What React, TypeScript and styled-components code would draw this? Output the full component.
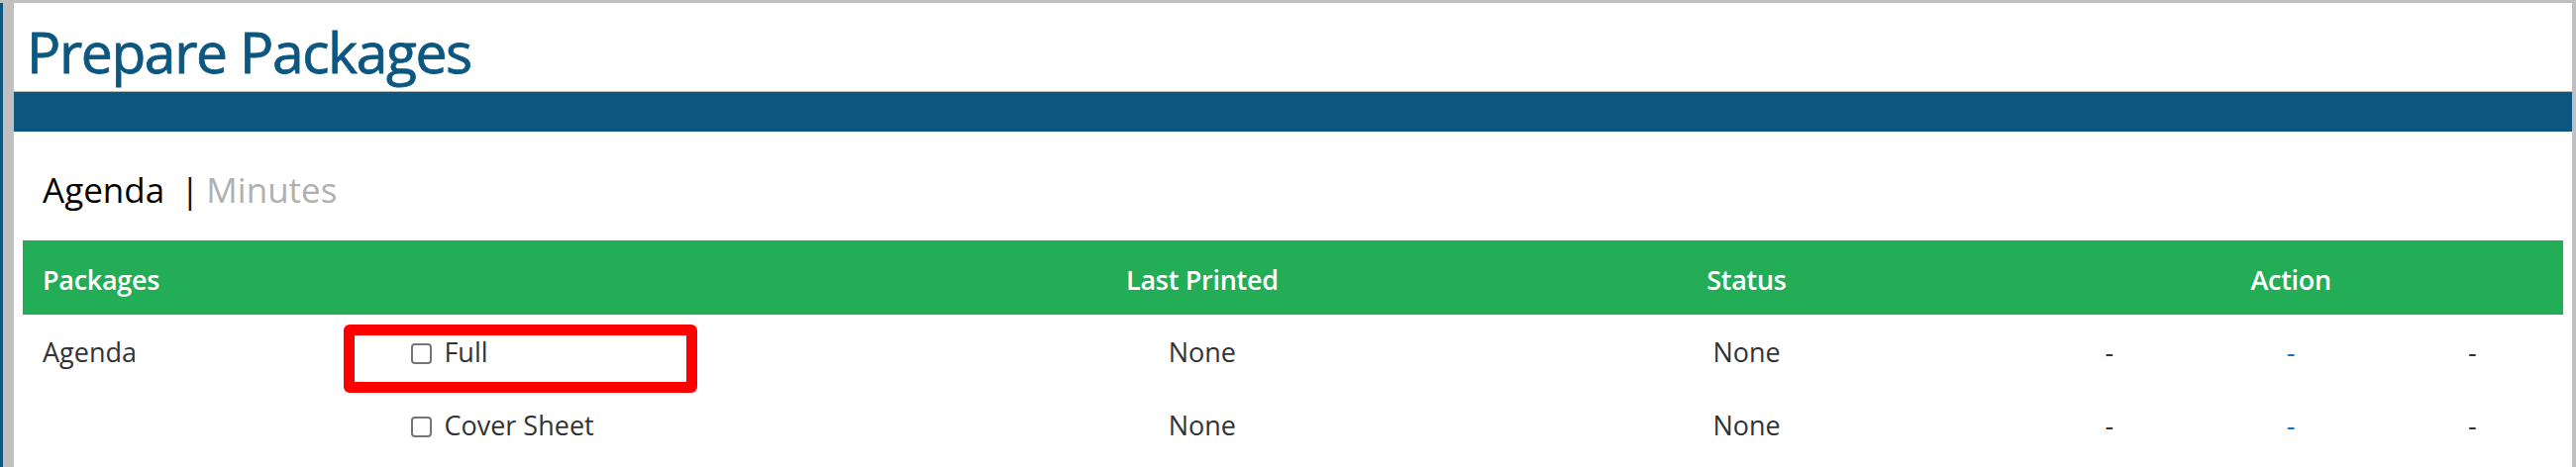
import React from "react";
import styled, { createGlobalStyle } from "styled-components";

const GlobalStyle = createGlobalStyle`
  html, body {
    margin: 0;
    padding: 0;
    background: #c0c0c0;
  }
  body {
    font-family: "Open Sans", "Liberation Sans", sans-serif;
    color: #333;
  }
  * { box-sizing: border-box; }
`;

const Page = styled.div`
  padding: 3px 4px 0 0;
  min-height: 472px;
`;

const Frame = styled.div`
  border-left: 3px solid #0b5780;
  padding-left: 11px;
  min-height: 469px;
`;

const Panel = styled.main`
  background: #ffffff;
  min-height: 469px;
  display: flex;
  flex-direction: column;
`;

const TitleBar = styled.header`
  padding: 9px 0 0 13px;
  border-bottom: 1px solid #b8b8b8;
`;

const Title = styled.h1`
  margin: 0;
  font-family: "Open Sans", sans-serif;
  font-weight: 400;
  font-size: 57px;
  letter-spacing: -1.4px;
  -webkit-text-stroke: 0.8px #0b5780;
  line-height: 80px;
  color: #0b5780;
`;

const BlueBand = styled.div`
  height: 40px;
  background: #0b5780;
`;

const Tabs = styled.nav`
  display: flex;
  align-items: baseline;
  margin: 36px 0 29px 29px;
  font-size: 35px;
  line-height: 45px;
`;

const Tab = styled.span<{ $active?: boolean }>`
  color: ${(p) => (p.$active ? "#000" : "#b0b0b0")};
`;

const TabSep = styled.span`
  color: #111;
  margin: 0 7px 0 16px;
`;

const Table = styled.section`
  margin: 0 9px;
  position: relative;
`;

const HeadRow = styled.div`
  display: grid;
  grid-template-columns: 5fr 3fr 3fr 3fr;
  height: 75px;
  padding-top: 4px;
  background: #23ad57;
  color: #fff;
  font-size: 27px;
  font-weight: 600;
  letter-spacing: -0.3px;
  line-height: 71px;
`;

const HeadCell = styled.div<{ $align?: "left" | "center" }>`
  padding: 0 20px;
  text-align: ${(p) => p.$align ?? "center"};
  white-space: nowrap;
`;

const BodyRow = styled.div`
  display: grid;
  grid-template-columns: 2fr 3fr 3fr 3fr 1fr 1fr 1fr;
  padding: 19px 0 18px;
  font-size: 27px;
  line-height: 37px;
  color: #333;
`;

const LabelCell = styled.div`
  padding: 0 20px;
  white-space: nowrap;
`;

const CheckCell = styled.label`
  display: flex;
  align-items: flex-start;
  gap: 12px;
  padding-left: 26px;
  white-space: nowrap;
`;

const Check = styled.input`
  appearance: none;
  -webkit-appearance: none;
  margin: 10px 0 0;
  width: 21px;
  height: 21px;
  border: 2px solid #767676;
  border-radius: 4px;
  background: #fff;
  flex: none;
`;

const Cell = styled.div`
  text-align: center;
  white-space: nowrap;
`;

const Dash = styled.div<{ $link?: boolean }>`
  text-align: center;
  color: ${(p) => (p.$link ? "#0a74c4" : "#333")};
`;

const Highlight = styled.div`
  position: absolute;
  left: 324px;
  top: 85px;
  width: 357px;
  height: 69px;
  border: 11px solid #ff0000;
  border-radius: 6px;
  pointer-events: none;
`;

const rows = [
  { label: "Agenda", pkg: "Full", printed: "None", status: "None" },
  { label: "", pkg: "Cover Sheet", printed: "None", status: "None" },
];

export default function App() {
  return (
    <>
      <GlobalStyle />
      <Page>
        <Frame>
          <Panel>
            <TitleBar>
              <Title>Prepare Packages</Title>
            </TitleBar>
            <BlueBand />
            <Tabs>
              <Tab $active>Agenda</Tab>
              <TabSep>|</TabSep>
              <Tab>Minutes</Tab>
            </Tabs>
            <Table>
              <HeadRow>
                <HeadCell $align="left">Packages</HeadCell>
                <HeadCell>Last Printed</HeadCell>
                <HeadCell>Status</HeadCell>
                <HeadCell>Action</HeadCell>
              </HeadRow>
              {rows.map((r) => (
                <BodyRow key={r.pkg}>
                  <LabelCell>{r.label}</LabelCell>
                  <CheckCell>
                    <Check type="checkbox" />
                    <span>{r.pkg}</span>
                  </CheckCell>
                  <Cell>{r.printed}</Cell>
                  <Cell>{r.status}</Cell>
                  <Dash>-</Dash>
                  <Dash $link>-</Dash>
                  <Dash>-</Dash>
                </BodyRow>
              ))}
              <Highlight />
            </Table>
          </Panel>
        </Frame>
      </Page>
    </>
  );
}
